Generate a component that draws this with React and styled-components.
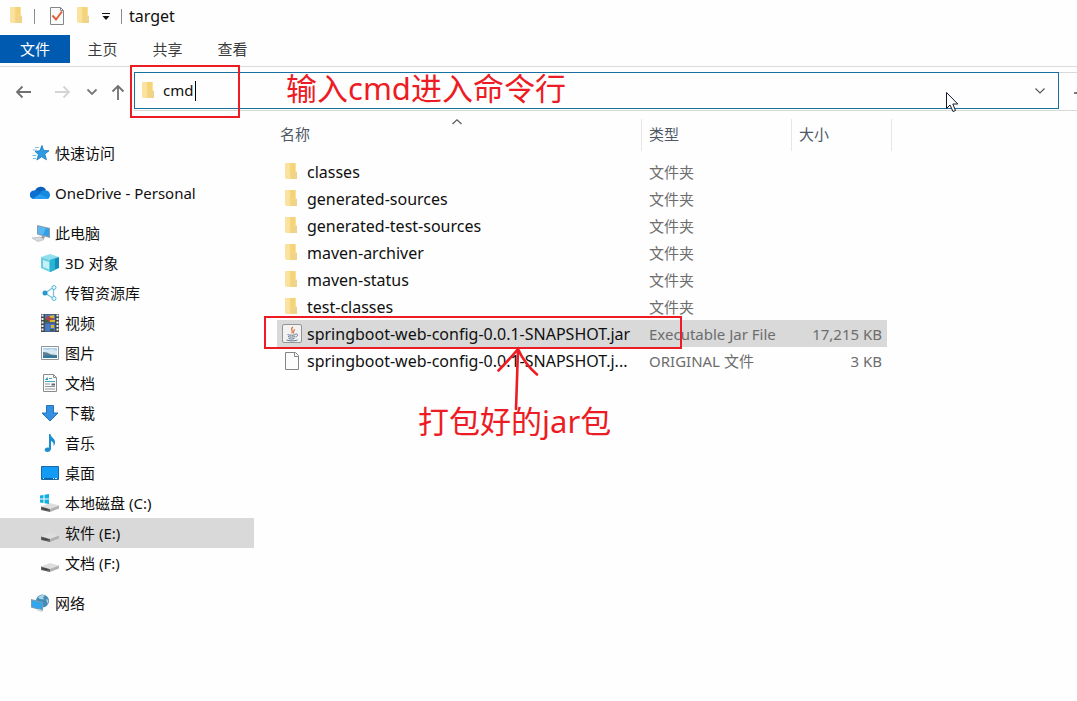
import React from "react";
import styled, { createGlobalStyle } from "styled-components";

const RED = "#ed1c24";

const GlobalStyle = createGlobalStyle`
  *, *::before, *::after { box-sizing: border-box; }
  html, body { margin: 0; background: #fefefe; }
  body, button, input {
    font-family: "Noto Sans", "Noto Sans CJK SC", sans-serif;
    font-size: 15px;
    line-height: 20px;
    color: #101010;
  }
  button { border: 0; padding: 0; background: none; }
`;

const Window = styled.div`
  position: relative;
  display: flex;
  flex-direction: column;
  min-height: 100vh;
  overflow: hidden;
`;

const TitleBar = styled.header`
  display: flex;
  align-items: center;
  height: 35px;
  padding: 0 0 3px 7px;
`;

const TitleText = styled.h1`
  margin: 0 0 0 7px;
  font-size: 16px;
  font-weight: 400;
  line-height: 20px;
`;

const QuickButton = styled.button`
  display: flex;
  align-items: center;
  justify-content: center;
  width: ${(p) => p.$width || 18}px;
  height: 20px;
`;

const Divider = styled.span`
  width: 1px;
  height: 15px;
  margin: 0 ${(p) => p.$after || 0}px 0 9px;
  background: #8c8c8c;
`;

const Ribbon = styled.nav`
  display: flex;
  align-items: flex-start;
  height: 32px;
  border-bottom: 1px solid #dadbdc;
`;

const RibbonTab = styled.button`
  width: ${(p) => (p.$primary ? 70 : 65)}px;
  height: 28px;
  background: ${(p) => (p.$primary ? "#005bb0" : "transparent")};
  color: ${(p) => (p.$primary ? "#fff" : "#3b3b3b")};
`;

const NavRow = styled.div`
  display: flex;
  align-items: flex-start;
  height: 44px;
  padding-top: 5px;
`;

const NavButtons = styled.div`
  display: flex;
  align-items: center;
  width: 134px;
  height: 39px;
  padding-left: 14px;
`;

const NavButton = styled.button`
  display: flex;
  align-items: center;
  justify-content: center;
  margin-left: ${(p) => p.$before || 0}px;
`;

const AddressSlot = styled.div`
  flex: 1;
  min-width: 0;
  height: 39px;
  border-bottom: 1px solid #d9d9d4;
`;

const AddressBar = styled.label`
  display: flex;
  align-items: center;
  height: 37px;
  padding: 0 12px 0 4px;
  border: 1px solid #17709f;
`;

const AddressInput = styled.input`
  width: 32px;
  height: 24px;
  margin-left: 6px;
  padding: 0 0 2px;
  border: 0;
  outline: 0;
  background: none;
`;

const Caret = styled.span`
  width: 1px;
  height: 20px;
  margin-right: auto;
  background: #000;
`;

const RefreshButton = styled.button`
  display: flex;
  align-items: center;
  justify-content: flex-end;
  width: 18px;
  height: 39px;
  border: solid #d9d9d9;
  border-width: 1px 0;
`;

const Body = styled.div`
  display: flex;
  flex: 1;
`;

const Sidebar = styled.nav`
  flex: none;
  width: 254px;
  padding-top: 27px;
`;

const TreeGroup = styled.ul`
  margin: 0 0 10px;
  padding: 0;
  list-style: none;
`;

const TreeItem = styled.a`
  display: flex;
  align-items: center;
  gap: 5px;
  height: 30px;
  padding-left: ${(p) => (p.$nested ? 40 : 30)}px;
  background: ${(p) => (p.$selected ? "#d9d9d9" : "transparent")};
  color: inherit;
  text-decoration: none;
  white-space: nowrap;
`;

const Content = styled.main`
  flex: 1;
  min-width: 0;
  padding: 8px 0 0 23px;
`;

const FileTable = styled.table`
  width: 615px;
  table-layout: fixed;
  border-collapse: collapse;
  white-space: nowrap;
`;

const HeadCell = styled.th`
  height: 39px;
  padding: 0;
  vertical-align: top;
  font-weight: 400;
`;

const SortButton = styled.button`
  position: relative;
  display: flex;
  align-items: center;
  width: 100%;
  height: 32px;
  padding: 0 0 2px ${(p) => p.$indent}px;
  border-right: 1px solid #e6e6e6;
  color: #4f5966;
`;

const SortMark = styled.span`
  position: absolute;
  top: 0;
  left: 50%;
  display: flex;
  margin-left: -8px;
`;

const FileRow = styled.tr`
  height: 27px;
  td:not(:last-child) {
    background: ${(p) => (p.$selected ? "#d9d9d9" : "transparent")};
  }
`;

const Cell = styled.td`
  height: 27px;
  padding: 0 5px 0 ${(p) => (p.$end ? 0 : 7)}px;
  color: #6d6d6d;
  text-align: ${(p) => (p.$end ? "right" : "left")};
`;

const NameCell = styled.td`
  height: 27px;
  padding: 0 0 0 5px;
  font-size: 16px;
`;

const FileName = styled.div`
  display: flex;
  align-items: center;
  gap: 5px;
`;

const GutterCell = styled.td`
  padding: 0;
`;

const Overlay = styled.div`
  position: absolute;
  top: ${(p) => p.$top}px;
  left: ${(p) => p.$left}px;
  display: flex;
  pointer-events: none;
`;

const RedFrame = styled(Overlay)`
  width: ${(p) => p.$width}px;
  height: ${(p) => p.$height}px;
  border: 2px solid ${RED};
`;

const RedNote = styled(Overlay)`
  color: ${RED};
  font-size: 31px;
  line-height: 40px;
  white-space: nowrap;
`;

const Icon = ({ w = 20, h = 20, children }) => (
  <svg width={w} height={h} viewBox={`0 0 ${w} ${h}`} fill="none" aria-hidden="true">
    {children}
  </svg>
);

const FolderIcon = ({ w = 18 }) => (
  <Icon w={w}>
    <path d="M3 1h10.500v8.500H15V17H5.500L3 16z" fill="#f8dc8c" />
    <path d="M3 1h3.500l1 2v14L3 16z" fill="#fae3a2" />
    <path d="M8.500 1h5v8.500h-3l-1 7.500h-1z" fill="#f5d477" />
    <path d="M10.500 10H15v7H9.500z" fill="#efd38b" />
  </Icon>
);

const CheckDocIcon = () => (
  <Icon w={18}>
    <path d="M2.500 1.500h10l3 3v14h-13z" fill="#fafafa" stroke="#84878a" />
    <path d="M12.500 1.500v3h3" stroke="#84878a" />
    <path d="M4.500 9.500l3.500 4 6-8" stroke="#df603c" strokeWidth="2" />
  </Icon>
);

const MenuCaretIcon = () => (
  <Icon w={10} h={10}>
    <path d="M1 2.500h8" stroke="#111" />
    <path d="M1.500 5h7L5 9z" fill="#111" />
  </Icon>
);

const ArrowIcon = ({ kind }) => {
  const color = kind === "forward" ? "#d4d4d4" : "#707070";
  const d = {
    back: "M17 10H3M8.500 4.500L3 10l5.500 5.500",
    forward: "M2 10h14M10.500 4.500L16 10l-5.500 5.500",
    up: "M7 18V4M1.500 9.500L7 4l5.500 5.500",
  }[kind];
  return (
    <Icon w={kind === "up" ? 14 : 18}>
      <path d={d} stroke={color} strokeWidth="1.8" />
    </Icon>
  );
};

const ChevronIcon = ({ up, color = "#555", heavy }) => (
  <Icon w={12} h={8}>
    <path
      d={up ? "M1.500 5L6 .8 10.500 5" : "M1.500 1.500L6 6l4.500-4.500"}
      stroke={color}
      strokeWidth={heavy ? 1.8 : 1.1}
    />
  </Icon>
);

const StarIcon = () => (
  <Icon>
    <path d="M12 2.500l1.600 5 5.400.2-4.200 3.500 1.700 5.600-4.900-3-4.700 3.200 1.600-5.400-3.500-3.200 4.800-.6z" fill="#2d9be4" stroke="#1977bb" strokeWidth=".8" />
    <path d="M5 4.500h4M3 7h4M2.500 12.500h4M3 15.500h3" stroke="#7abce8" />
  </Icon>
);

const CloudIcon = () => (
  <Icon>
    <path d="M5 8a6 6 0 0 1 11-1l-5 5-7 3-3-1A4 4 0 0 1 5 8z" fill="#0a5fb8" />
    <path d="M16 7.500A4.500 4.500 0 0 1 17.500 16H5l5-7c2-1.500 4-2 6-1.500z" fill="#1689df" />
    <path d="M4 7.500c3-.5 5 .5 7 2L4 16a4.200 4.200 0 0 1 0-8.500z" fill="#0d6fd0" />
    <path d="M3 15.500l7-4.500 9 4.500c-.6.400-1 .5-2 .5H5c-.8 0-1.400-.2-2-.5z" fill="#239df1" />
  </Icon>
);

const ComputerIcon = () => (
  <Icon>
    <path d="M7 2l13 3v10L7 11.500z" fill="#8d9caa" />
    <path d="M8 3.200l11 2.600v7.800L8 10.700z" fill="#329ee6" />
    <path d="M8 3.200l8 1.900-3 6.700-5-1.100z" fill="#59b8f0" />
    <path d="M12 13l3 .7-1 2-3-1z" fill="#8c939a" />
    <path d="M2 15l8-1 4 2.500-6 2z" fill="#d7dadd" stroke="#b4b8bb" strokeWidth=".7" />
  </Icon>
);

const CubeIcon = () => (
  <Icon>
    <path d="M1 4l9-3 9 3-9 3z" fill="#8fdfee" />
    <path d="M1 4l9 3v12l-9-4z" fill="#68cde1" />
    <path d="M3 7l6 2v7.500l-6-2.500z" fill="#c4f0f6" />
    <path d="M19 4l-9 3v12l9-4z" fill="#0f8dbb" />
    <path d="M10 7l5-1.500V17l-5 2z" fill="#28b5d4" />
  </Icon>
);

const ShareIcon = () => (
  <Icon>
    <path d="M5 10l8.500-5.500v11z" stroke="#7cc3df" strokeWidth="1.300" />
    <circle cx="5" cy="10" r="2.500" fill="#2898cf" />
    <circle cx="14" cy="4.500" r="2" fill="#eaf8fc" stroke="#59b5d6" />
    <circle cx="14" cy="15.500" r="2" fill="#eaf8fc" stroke="#59b5d6" />
  </Icon>
);

const VideoIcon = () => (
  <Icon>
    <path d="M1 1h18v18H1z" fill="#45494c" />
    <path d="M5 1.500h10v8H5zM5 10.500h10v8H5z" fill="#4778c9" />
    <path d="M7 3h4l3 4-4 2H5V7z" fill="#a94649" />
    <path d="M9 3l5-1v3h-3zM10 7h5v2h-5zM11 12h3v3h-3z" fill="#d5b92c" />
    <path d="M5 6l4 2-1 1H5zM10 16h4v2h-4z" fill="#34653e" />
    <path d="M2.500 1.500v17M17.500 1.500v17" stroke="#f3f3f3" strokeWidth="2" strokeDasharray="2 1.500" />
  </Icon>
);

const PictureIcon = () => (
  <Icon>
    <path d="M1.500 3.500h17v13h-17z" fill="#fff" stroke="#8d9498" />
    <path d="M3 5h14v10H3z" fill="#a9d1ed" />
    <path d="M3 6l5 1 4-1 5 2v4H3z" fill="#d7e8f1" />
    <path d="M3 9l4 .5 4 2 6 .5v3H3z" fill="#5d8090" />
    <path d="M3 13l6-1 8 1v2H3z" fill="#34769c" />
  </Icon>
);

const DocumentIcon = () => (
  <Icon>
    <path d="M3.500 1.500h10l3 3v14h-13z" fill="#fbfbfb" stroke="#898c8e" />
    <path d="M13.500 1.500v3h3" stroke="#898c8e" />
    <path d="M9 5.500h3M5 8.500h10" stroke="#39acc2" strokeWidth="1.200" />
    <path d="M5 7l2.500-3L8 7z" fill="#258fb7" />
    <path d="M5 11h5M5 13.500h10M5 16h10" stroke="#919799" />
    <path d="M11.500 10.500H15v2h-3.500z" fill="#526d7d" />
  </Icon>
);

const DownloadIcon = () => (
  <Icon>
    <path d="M6.500 2.500h7V10H18l-8 8-8-8h4.500z" fill="#3490e3" stroke="#2673b8" />
  </Icon>
);

const MusicIcon = () => (
  <Icon>
    <path d="M9 1h1.500c.5 4 5 4 4.500 9-.1 1.300-.8 2.500-1.500 3.200.7-3-.6-4.600-2.500-5.200v7.500C11 17.500 9.500 19 7.500 19 3.500 19 4 14.500 7.500 14.500c.6 0 1 .1 1.500.3z" fill="#1b8ed2" />
  </Icon>
);

const DesktopIcon = () => (
  <Icon>
    <path d="M1.500 3.500h17v13h-17z" fill="#129bf5" stroke="#176aa5" />
    <path d="M2 15.500h16" stroke="#0a62a3" />
    <path d="M3 15.500h1M13 15.500h1M15 15.500h2" stroke="#d9efff" />
  </Icon>
);

const DriveIcon = ({ windows }) => (
  <Icon>
    <path d="M1 13.500L10 10l9 2.500-8 3.500z" fill="#dededf" />
    <path d="M1 13.500l9 2.500v3L1 17z" fill="#626262" />
    <path d="M10 16l9-3.500v3L10 19z" fill="#b1b1b1" />
    <path d="M2.500 15.500l5 1.200" stroke="#343434" />
    {windows && <path d="M0 2.500L3.500 2v3.500H0zM4.500 1.800L9 1v4.500H4.500zM0 6.500h3.500V10L0 9.500zM4.500 6.500H9V11l-4.500-.8z" fill="#12afe2" />}
  </Icon>
);

const NetworkIcon = () => (
  <Icon>
    <circle cx="12.500" cy="8" r="6.500" fill="#448bb5" />
    <path d="M8 4.500c2-3 5-3 7-2l-2 2 1 2-4-.5zM16 6l2.500 1-1 4z" fill="#a9d4e4" />
    <path d="M1 6l12 3v9L1 14.500z" fill="#7d9cae" />
    <path d="M2 7.300l10 2.500v6.700L2 13.700z" fill="#34a6ed" />
    <path d="M6 17l5 2 3-1-5-2z" fill="#d5dade" />
  </Icon>
);

const JavaIcon = () => (
  <Icon>
    <rect x=".5" y=".5" width="19" height="18" rx="1.500" fill="#f2f2f2" stroke="#929496" />
    <path d="M11 3c-4 2.500 1.500 4-1.500 6M13 5.500c-2.500 1-.5 2.500-2 4" stroke="#dd7643" strokeWidth="1.200" />
    <path d="M5.500 10.500c2 1 6 1 8 0M6 12.500c2 .8 5 .8 7 0M6.500 14.500c2 .7 4 .7 6 0M4.500 16c3 1.200 8 1.200 11 0M13.500 10c3-.3 2.500 2.500 0 3" stroke="#60788d" />
  </Icon>
);

const BlankFileIcon = () => (
  <Icon>
    <path d="M3.500 1.500h10l3 3v14h-13z" fill="#fcfcfc" stroke="#858585" />
    <path d="M12.500 1.500v4h4" stroke="#858585" />
  </Icon>
);

const PointerIcon = () => (
  <Icon w={13} h={20}>
    <path d="M.5.500v16L4 13l3 6.500 2.500-1L6.800 12h5z" fill="#fff" stroke="#111a2a" />
  </Icon>
);

const tree = [
  [{ label: "快速访问", icon: <StarIcon /> }],
  [{ label: "OneDrive - Personal", icon: <CloudIcon /> }],
  [
    { label: "此电脑", icon: <ComputerIcon /> },
    { label: "3D 对象", icon: <CubeIcon />, nested: true },
    { label: "传智资源库", icon: <ShareIcon />, nested: true },
    { label: "视频", icon: <VideoIcon />, nested: true },
    { label: "图片", icon: <PictureIcon />, nested: true },
    { label: "文档", icon: <DocumentIcon />, nested: true },
    { label: "下载", icon: <DownloadIcon />, nested: true },
    { label: "音乐", icon: <MusicIcon />, nested: true },
    { label: "桌面", icon: <DesktopIcon />, nested: true },
    { label: "本地磁盘 (C:)", icon: <DriveIcon windows />, nested: true },
    { label: "软件 (E:)", icon: <DriveIcon />, nested: true, selected: true },
    { label: "文档 (F:)", icon: <DriveIcon />, nested: true },
  ],
  [{ label: "网络", icon: <NetworkIcon /> }],
];

const folders = [
  "classes",
  "generated-sources",
  "generated-test-sources",
  "maven-archiver",
  "maven-status",
  "test-classes",
];

const files = [
  ...folders.map((name) => ({ name, type: "文件夹", size: "", icon: <FolderIcon w={20} /> })),
  { name: "springboot-web-config-0.0.1-SNAPSHOT.jar", type: "Executable Jar File", size: "17,215 KB", icon: <JavaIcon />, selected: true },
  { name: "springboot-web-config-0.0.1-SNAPSHOT.j...", type: "ORIGINAL 文件", size: "3 KB", icon: <BlankFileIcon /> },
];

export default function App() {
  return (
    <Window>
      <GlobalStyle />
      <TitleBar>
        <FolderIcon />
        <Divider $after={13} />
        <QuickButton aria-label="属性"><CheckDocIcon /></QuickButton>
        <QuickButton $width={34} aria-label="新建文件夹"><FolderIcon /></QuickButton>
        <QuickButton $width={12} aria-label="自定义快速访问工具栏"><MenuCaretIcon /></QuickButton>
        <Divider />
        <TitleText>target</TitleText>
      </TitleBar>

      <Ribbon>
        <RibbonTab $primary>文件</RibbonTab>
        <RibbonTab>主页</RibbonTab>
        <RibbonTab>共享</RibbonTab>
        <RibbonTab>查看</RibbonTab>
      </Ribbon>

      <NavRow>
        <NavButtons>
          <NavButton aria-label="后退"><ArrowIcon kind="back" /></NavButton>
          <NavButton $before={21} aria-label="前进"><ArrowIcon kind="forward" /></NavButton>
          <NavButton $before={15} aria-label="最近位置"><ChevronIcon heavy color="#777" /></NavButton>
          <NavButton $before={13} aria-label="上移"><ArrowIcon kind="up" /></NavButton>
        </NavButtons>
        <AddressSlot>
          <AddressBar>
            <FolderIcon />
            <AddressInput aria-label="地址" defaultValue="cmd" />
            <Caret />
            <NavButton aria-label="以前的位置"><ChevronIcon /></NavButton>
          </AddressBar>
        </AddressSlot>
        <RefreshButton aria-label="刷新">
          <Icon w={3} h={8}><path d="M0 5h3" stroke="#777" strokeWidth="2" /></Icon>
        </RefreshButton>
      </NavRow>

      <Body>
        <Sidebar>
          {tree.map((group, i) => (
            <TreeGroup key={i}>
              {group.map((item) => (
                <li key={item.label}>
                  <TreeItem href="#" $nested={item.nested} $selected={item.selected}>
                    {item.icon}
                    {item.label}
                  </TreeItem>
                </li>
              ))}
            </TreeGroup>
          ))}
        </Sidebar>

        <Content>
          <FileTable>
            <colgroup>
              <col width="365" />
              <col width="150" />
              <col width="95" />
              <col width="5" />
            </colgroup>
            <thead>
              <tr>
                <HeadCell>
                  <SortButton $indent={3}>
                    名称
                    <SortMark><ChevronIcon up /></SortMark>
                  </SortButton>
                </HeadCell>
                <HeadCell><SortButton $indent={7}>类型</SortButton></HeadCell>
                <HeadCell colSpan={2}><SortButton $indent={7}>大小</SortButton></HeadCell>
              </tr>
            </thead>
            <tbody>
              {files.map((file) => (
                <FileRow key={file.name} $selected={file.selected}>
                  <NameCell>
                    <FileName>{file.icon}{file.name}</FileName>
                  </NameCell>
                  <Cell>{file.type}</Cell>
                  <Cell $end>{file.size}</Cell>
                  <GutterCell />
                </FileRow>
              ))}
            </tbody>
          </FileTable>
        </Content>
      </Body>

      <RedFrame $left={130} $top={65} $width={110} $height={53} />
      <RedNote $left={286} $top={68}>输入cmd进入命令行</RedNote>
      <RedFrame $left={264} $top={316} $width={418} $height={33} />
      <RedNote $left={418} $top={401}>打包好的jar包</RedNote>
      <Overlay $left={496} $top={345}>
        <Icon w={44} h={66}>
          <path d="M20 64L22 4M2.500 25.500C10 18 17 10 22 4c4 9 9 17 19 25.500" stroke={RED} strokeWidth="2.600" strokeLinecap="round" />
        </Icon>
      </Overlay>
      <Overlay $left={946} $top={92}><PointerIcon /></Overlay>
    </Window>
  );
}
